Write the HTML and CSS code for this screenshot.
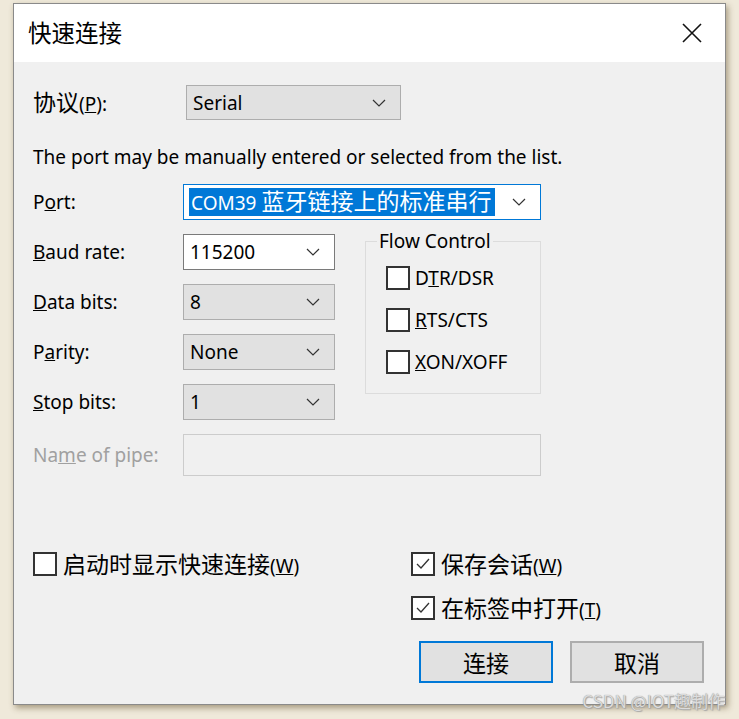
FILE: index.html
```html
<!DOCTYPE html>
<html lang="zh-CN">
<head>
    <meta charset="UTF-8">
    <meta name="viewport" content="width=device-width, initial-scale=1.0">
    <title>快速连接</title>
    <link rel="stylesheet" href="styles.css">
</head>
<body>
    <div class="window">
        <div class="titlebar">
            <span class="title">快速连接</span>
            <svg class="close" width="20" height="20" viewBox="0 0 20 20">
                <path d="M1 1L19 19M19 1L1 19" stroke="#111" stroke-width="1.6" fill="none"/>
            </svg>
        </div>
        <div class="content">
            <div class="protoRow">
                <span class="label zh">协议<span class="lat">(<u>P</u>):</span></span>
                <div class="combo gray proto">
                    <span>Serial</span>
                    <svg class="chev" width="14" height="8" viewBox="0 0 14 8"><path d="M1 1L7 7L13 1" stroke="#333" stroke-width="1.2" fill="none"/></svg>
                </div>
            </div>
            <p class="hint">The port may be manually entered or selected from the list.</p>

            <div class="portGrid">
                <span class="label">P<u>o</u>rt:</span>
                <div class="combo focus">
                    <span class="selected">COM39 <span class="zh">蓝牙链接上的标准串行</span></span>
                    <svg class="chev" width="14" height="8" viewBox="0 0 14 8"><path d="M1 1L7 7L13 1" stroke="#333" stroke-width="1.2" fill="none"/></svg>
                </div>

                <span class="label"><u>B</u>aud rate:</span>
                <div class="combo white">
                    <span>115200</span>
                    <svg class="chev" width="14" height="8" viewBox="0 0 14 8"><path d="M1 1L7 7L13 1" stroke="#333" stroke-width="1.2" fill="none"/></svg>
                </div>

                <fieldset class="flow">
                    <legend>Flow Control</legend>
                    <div class="checkList">
                        <label class="check"><span class="box"></span><span>D<u>T</u>R/DSR</span></label>
                        <label class="check"><span class="box"></span><span><u>R</u>TS/CTS</span></label>
                        <label class="check"><span class="box"></span><span><u>X</u>ON/XOFF</span></label>
                    </div>
                </fieldset>

                <span class="label"><u>D</u>ata bits:</span>
                <div class="combo gray">
                    <span>8</span>
                    <svg class="chev" width="14" height="8" viewBox="0 0 14 8"><path d="M1 1L7 7L13 1" stroke="#333" stroke-width="1.2" fill="none"/></svg>
                </div>

                <span class="label">P<u>a</u>rity:</span>
                <div class="combo gray">
                    <span>None</span>
                    <svg class="chev" width="14" height="8" viewBox="0 0 14 8"><path d="M1 1L7 7L13 1" stroke="#333" stroke-width="1.2" fill="none"/></svg>
                </div>

                <span class="label"><u>S</u>top bits:</span>
                <div class="combo gray">
                    <span>1</span>
                    <svg class="chev" width="14" height="8" viewBox="0 0 14 8"><path d="M1 1L7 7L13 1" stroke="#333" stroke-width="1.2" fill="none"/></svg>
                </div>

                <span class="label disabled">Na<u>m</u>e of pipe:</span>
                <div class="pipe"></div>
            </div>

            <div class="bottom">
                <label class="check zhCheck"><span class="box"></span><span class="zh">启动时显示快速连接<span class="lat">(<u>W</u>)</span></span></label>
                <div class="rightChecks">
                    <label class="check zhCheck"><span class="box"><svg width="20" height="20" viewBox="0 0 20 20"><path d="M4 10L8 14L16 5" stroke="#333" stroke-width="1.3" fill="none"/></svg></span><span class="zh">保存会话<span class="lat">(<u>W</u>)</span></span></label>
                    <label class="check zhCheck"><span class="box"><svg width="20" height="20" viewBox="0 0 20 20"><path d="M4 10L8 14L16 5" stroke="#333" stroke-width="1.3" fill="none"/></svg></span><span class="zh">在标签中打开<span class="lat">(<u>T</u>)</span></span></label>
                </div>
            </div>

            <div class="buttons">
                <button class="btn primary zh">连接</button>
                <button class="btn zh">取消</button>
            </div>
        </div>
    </div>
    <div class="watermark">CSDN @IOT趣制作</div>
</body>
</html>
```

FILE: styles.css
```css
body {
    margin: 0;
    padding: 3px 0 0 13px;
    background-color: #efe9da;
    font-family: "Noto Sans", "Noto Sans CJK SC", sans-serif;
    font-size: 19px;
    color: #000;
    height: 716px;
    overflow: hidden;
}

.window {
    width: 711px;
    height: 700px;
    border: 1px solid #8a8a8a;
    background-color: #f0f0f0;
    box-shadow: 2px 3px 6px rgba(80, 60, 20, 0.45);
}

.titlebar {
    height: 58px;
    background-color: #fff;
    display: flex;
    align-items: center;
    justify-content: space-between;
    padding: 0 23px 0 14px;
}

.title {
    font-family: "Noto Sans CJK SC", sans-serif;
    font-size: 23.5px;
    margin-top: -2px;
}

.close {
    display: block;
}

.content {
    padding: 23px 21px 0 19px;
}

.zh {
    font-family: "Noto Sans CJK SC", sans-serif;
    font-size: 23px;
    line-height: 24px;
}

.lat {
    font-family: "Noto Sans", sans-serif;
    font-size: 19px;
}

.protoRow {
    display: flex;
    align-items: center;
}

.protoRow .label {
    width: 153px;
}

.label {
    line-height: 24px;
    grid-column: 1;
}

.disabled {
    color: #a0a0a0;
}

.combo {
    box-sizing: border-box;
    height: 36px;
    display: flex;
    align-items: center;
    justify-content: space-between;
    padding: 0 14px 0 6px;
    border: 1px solid #adadad;
}

.combo.gray {
    background-color: #e1e1e1;
}

.combo.white {
    background-color: #fff;
    border-color: #7a7a7a;
}

.combo.proto {
    width: 215px;
    height: 35px;
}

.combo.focus {
    background-color: #fff;
    border: 1px solid #0078d7;
}

.selected {
    background-color: #0078d7;
    color: #fff;
    line-height: 26px;
    padding: 0 4px 0 2px;
    margin-left: -1px;
}

.chev {
    display: block;
}

.hint {
    margin: 25px 0 15px;
    line-height: 24px;
}

.portGrid {
    display: grid;
    grid-template-columns: 150px 152px 30px 176px;
    grid-template-rows: 36px 36px 36px 36px 36px 42px;
    row-gap: 14px;
    align-items: center;
}

.portGrid .combo {
    grid-column: 2;
}

.portGrid .combo.focus {
    grid-column: 2 / 5;
}

.flow {
    grid-column: 4;
    grid-row: 2 / 6;
    align-self: start;
    box-sizing: border-box;
    height: 165px;
    margin: -5px 0 0;
    padding: 0 0 0 11px;
    border: 1px solid #dcdcdc;
}

.flow legend {
    padding: 0 2px;
    line-height: 24px;
}

.checkList {
    display: flex;
    flex-direction: column;
    gap: 18px;
    padding: 13px 0 0 9px;
}

.check {
    display: flex;
    align-items: center;
    gap: 5px;
    height: 24px;
    line-height: 24px;
}

.box {
    box-sizing: border-box;
    width: 24px;
    height: 24px;
    border: 2px solid #333;
    background-color: #fff;
    display: flex;
    align-items: center;
    justify-content: center;
    flex-shrink: 0;
}

.pipe {
    grid-column: 2 / 5;
    height: 42px;
    box-sizing: border-box;
    border: 1px solid #cccccc;
    background-color: #f0f0f0;
}

.bottom {
    display: grid;
    grid-template-columns: 378px 1fr;
    margin-top: 76px;
    align-items: start;
}

.zhCheck {
    gap: 6px;
}

.rightChecks {
    display: flex;
    flex-direction: column;
    gap: 20px;
}

.buttons {
    display: flex;
    justify-content: flex-end;
    gap: 17px;
    margin-top: 21px;
}

.btn {
    width: 134px;
    height: 42px;
    box-sizing: border-box;
    border: 2px solid #adadad;
    background-color: #e1e1e1;
    padding: 0;
    color: #000;
}

.btn.primary {
    border-color: #0078d7;
}

.watermark {
    position: absolute;
    right: 14px;
    top: 688px;
    font-family: "Noto Sans CJK SC", sans-serif;
    font-size: 17px;
    color: #dcdcdc;
    text-shadow: 0 0 1px #888, 1px 1px 1px #aaa;
}
```
